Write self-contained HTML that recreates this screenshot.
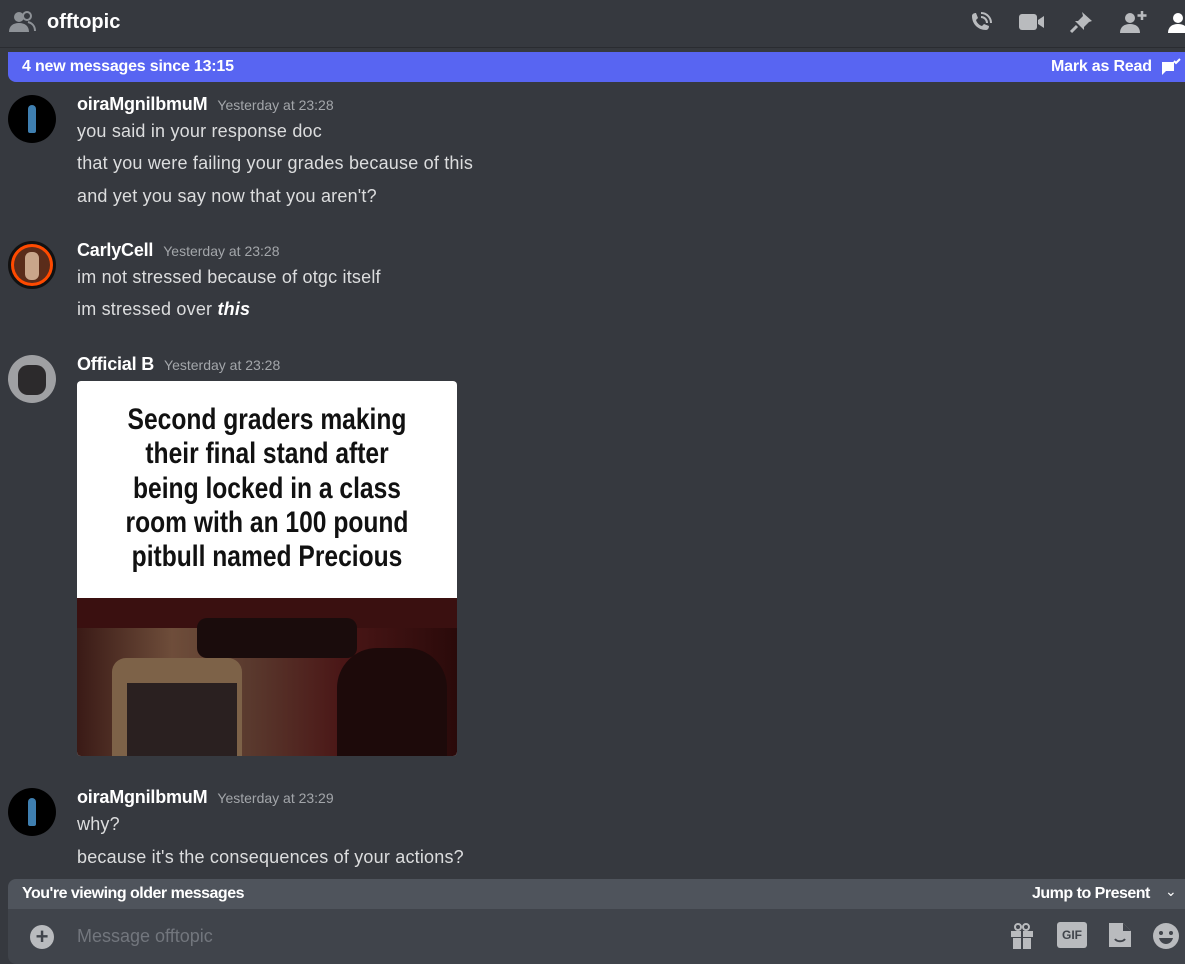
<!DOCTYPE html>
<html><head><meta charset="utf-8"><style>
*{margin:0;padding:0;box-sizing:border-box}
body{width:1185px;height:964px;background:#36393f;font-family:"Liberation Sans",sans-serif;overflow:hidden;position:relative;color:#dcddde}
.a{position:absolute}
.hdr{left:0;top:0;width:1185px;height:48px;border-bottom:1px solid #2a2c31;background:#36393f}
.name{font-size:18px;color:#fff;font-weight:bold;letter-spacing:-0.2px}
.ts{font-size:14px;color:#a3a6aa;margin-left:10px}
.msg{font-size:18px;color:#dcddde;white-space:nowrap;letter-spacing:0.2px}
.av{width:48px;height:48px;border-radius:50%;left:8px}
</style></head><body>
<div class="a hdr"></div>
<svg class="a" style="left:8px;top:10px" width="28" height="24" viewBox="0 0 28 24"><circle cx="11" cy="7" r="5" fill="#8e9297"/><path d="M1 22c0-6 4-9 10-9s10 3 10 9z" fill="#8e9297"/><circle cx="19" cy="6" r="4" fill="none" stroke="#8e9297" stroke-width="2"/><path d="M20 12c4 1 7 4 7 9" stroke="#8e9297" stroke-width="2" fill="none"/></svg>
<div class="a" style="left:47px;top:11px;font-size:20px;font-weight:bold;color:#fff">offtopic</div>
<svg class="a" style="left:968px;top:10px" width="26" height="26" viewBox="0 0 26 26"><path d="M4 6c0-2 2-3 4-3l2 5-2 2c1 3 3 5 6 6l2-2 5 2c0 2-1 4-3 4C10 20 4 14 4 6z" fill="#b9bbbe"/><path d="M13 3a10 10 0 0 1 10 10M13 7a6 6 0 0 1 6 6" stroke="#b9bbbe" stroke-width="2" fill="none"/></svg>
<svg class="a" style="left:1018px;top:12px" width="28" height="20" viewBox="0 0 28 20"><rect x="1" y="2" width="18" height="16" rx="3" fill="#b9bbbe"/><path d="M20 8l6-4v12l-6-4z" fill="#b9bbbe"/></svg>
<svg class="a" style="left:1068px;top:9px" width="28" height="26" viewBox="0 0 28 26"><path d="M14 3l10 9-3 1-5 5v3l-9-9h3l5-5z" fill="#b9bbbe"/><path d="M9 17l-6 6" stroke="#b9bbbe" stroke-width="3"/></svg>
<svg class="a" style="left:1118px;top:9px" width="30" height="26" viewBox="0 0 30 26"><circle cx="12" cy="9" r="5" fill="#b9bbbe"/><path d="M2 24c0-6 4-9 10-9s10 3 10 9z" fill="#b9bbbe"/><path d="M24 2v9M19.5 6.5h9" stroke="#b9bbbe" stroke-width="2.5"/></svg>
<svg class="a" style="left:1166px;top:9px" width="19" height="26" viewBox="0 0 19 26"><circle cx="12" cy="9" r="5" fill="#fff"/><path d="M2 24c0-6 4-9 10-9s10 3 10 9z" fill="#fff"/></svg>
<div class="a" style="left:8px;top:52px;width:1177px;height:30px;background:#5865f2;border-radius:0 0 0 8px"></div>
<div class="a" style="left:22px;top:58px;font-size:16px;font-weight:bold;color:#fff;letter-spacing:-0.2px">4 new messages since 13:15</div>
<div class="a" style="left:1051px;top:58px;font-size:16px;font-weight:bold;color:#fff;letter-spacing:-0.2px">Mark as Read</div>
<svg class="a" style="left:1160px;top:57px" width="22" height="20" viewBox="0 0 22 20"><path d="M2 5h12v9H6l-4 4z" fill="#fff"/><path d="M14 4l2 2 4-4" stroke="#fff" stroke-width="2" fill="none"/></svg>
<div class="a av" style="top:95px;background:#000"><div class="a" style="left:20px;top:10px;width:8px;height:28px;background:#3f7fb0;border-radius:4px 4px 2px 2px"></div></div>
<div class="a" style="left:77px;top:94px"><span class="name">oiraMgnilbmuM</span><span class="ts">Yesterday at 23:28</span></div>
<div class="a msg" style="left:77px;top:121px">you said in your response doc</div>
<div class="a msg" style="left:77px;top:153px">that you were failing your grades because of this</div>
<div class="a msg" style="left:77px;top:186px">and yet you say now that you aren't?</div>
<div class="a av" style="top:241px;background:#ff4a00;border:3px solid #111"><div class="a" style="left:3px;top:3px;width:36px;height:36px;border-radius:50%;background:#5a2c1a"></div><div class="a" style="left:14px;top:8px;width:14px;height:28px;border-radius:6px;background:#c9a58a"></div></div>
<div class="a" style="left:77px;top:240px"><span class="name">CarlyCell</span><span class="ts">Yesterday at 23:28</span></div>
<div class="a msg" style="left:77px;top:267px">im not stressed because of otgc itself</div>
<div class="a msg" style="left:77px;top:299px">im stressed over <b><i style="color:#fff">this</i></b></div>
<div class="a av" style="top:355px;background:#9fa0a3"><div class="a" style="left:10px;top:10px;width:28px;height:30px;border-radius:10px;background:#2c2a2c"></div></div>
<div class="a" style="left:77px;top:354px"><span class="name">Official B</span><span class="ts">Yesterday at 23:28</span></div>
<div class="a" style="left:77px;top:381px;width:380px;height:375px;border-radius:4px;overflow:hidden;background:#fff">
 <div class="a" style="left:-10px;top:22px;width:400px;text-align:center;font-size:30px;line-height:34.3px;font-weight:bold;color:#111;transform:scaleX(0.82)">Second graders making<br>their final stand after<br>being locked in a class<br>room with an 100 pound<br>pitbull named Precious</div>
 <div class="a" style="left:0;top:217px;width:380px;height:158px;background:linear-gradient(90deg,#3a1a16 0%,#6e4d3a 25%,#5a3a2e 45%,#4a1616 70%,#2a0a0a 100%)">
  <div class="a" style="left:0;top:0;width:380px;height:30px;background:#3a1010"></div>
  <div class="a" style="left:35px;top:60px;width:130px;height:98px;background:#7d6248;border-radius:14px 14px 0 0"></div>
  <div class="a" style="left:50px;top:85px;width:110px;height:73px;background:#2a2020"></div>
  <div class="a" style="left:260px;top:50px;width:110px;height:108px;background:#1d0a0a;border-radius:40px 40px 0 0"></div>
  <div class="a" style="left:120px;top:20px;width:160px;height:40px;background:#1a0c0c;border-radius:10px"></div>
 </div>
</div>
<div class="a av" style="top:788px;background:#000"><div class="a" style="left:20px;top:10px;width:8px;height:28px;background:#3f7fb0;border-radius:4px 4px 2px 2px"></div></div>
<div class="a" style="left:77px;top:787px"><span class="name">oiraMgnilbmuM</span><span class="ts">Yesterday at 23:29</span></div>
<div class="a msg" style="left:77px;top:814px">why?</div>
<div class="a msg" style="left:77px;top:847px">because it's the consequences of your actions?</div>
<div class="a" style="left:8px;top:879px;width:1177px;height:40px;background:#4f545c;border-radius:8px 0 0 0"></div>
<div class="a" style="left:22px;top:885px;font-size:16px;font-weight:bold;color:#fff;letter-spacing:-0.5px">You're viewing older messages</div>
<div class="a" style="left:1032px;top:885px;font-size:16px;font-weight:bold;color:#fff;letter-spacing:-0.5px">Jump to Present</div>
<div class="a" style="left:1165px;top:883px;font-size:14px;color:#fff">&#8964;</div>
<div class="a" style="left:8px;top:909px;width:1177px;height:55px;background:#40444b;border-radius:0 0 0 8px"></div>
<div class="a" style="left:30px;top:925px;width:24px;height:24px;border-radius:50%;background:#b9bbbe;color:#40444b;font-weight:bold;font-size:22px;line-height:24px;text-align:center">+</div>
<div class="a" style="left:77px;top:926px;font-size:18px;color:#72767d">Message offtopic</div>
<svg class="a" style="left:1009px;top:922px" width="26" height="28" viewBox="0 0 26 28"><rect x="2" y="9" width="22" height="6" fill="#b9bbbe"/><rect x="4" y="16" width="18" height="11" fill="#b9bbbe"/><rect x="12" y="9" width="2" height="18" fill="#40444b"/><circle cx="9" cy="5" r="3" fill="none" stroke="#b9bbbe" stroke-width="2"/><circle cx="17" cy="5" r="3" fill="none" stroke="#b9bbbe" stroke-width="2"/></svg>
<div class="a" style="left:1057px;top:922px;width:30px;height:26px;background:#b9bbbe;border-radius:3px;color:#40444b;font-weight:bold;font-size:12px;line-height:26px;text-align:center">GIF</div>
<svg class="a" style="left:1107px;top:921px" width="26" height="28" viewBox="0 0 26 28"><path d="M2 2h14l8 8v16H2z" fill="#b9bbbe"/><path d="M16 2v8h8" fill="#40444b"/><path d="M8 18c2 3 8 3 10 0" stroke="#40444b" stroke-width="2" fill="none"/></svg>
<svg class="a" style="left:1151px;top:921px" width="30" height="30" viewBox="0 0 30 30"><circle cx="15" cy="15" r="13" fill="#b9bbbe"/><circle cx="10" cy="12" r="2" fill="#40444b"/><circle cx="20" cy="12" r="2" fill="#40444b"/><path d="M8 17h14c-1 4-4 6-7 6s-6-2-7-6z" fill="#40444b"/></svg>
</body></html>
